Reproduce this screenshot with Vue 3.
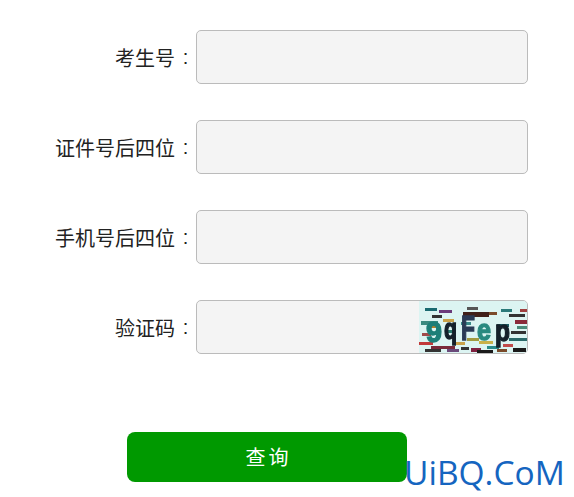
<script setup>
const rows = [
  { label: '考生号' },
  { label: '证件号后四位' },
  { label: '手机号后四位' },
  { label: '验证码', captcha: true }
]
const dashes = [
  [6,7,12,3,'#1a6a70'],[20,9,13,3,'#6a3a7a'],[13,14,10,3,'#333'],[2,20,17,4,'#3a8a80'],[24,18,11,3,'#c9a24a'],
  [48,6,11,3,'#555'],[64,11,14,3,'#7a4a2a'],[44,11,26,5,'#40201a'],[82,8,11,3,'#2a7a7a'],[90,13,16,3,'#333'],
  [96,19,12,4,'#8a2a3a'],[78,23,12,3,'#1a5a60'],[101,8,7,3,'#a04040'],[42,21,10,3,'#3a8a8a'],[12,25,8,2,'#b9802a'],
  [3,32,9,3,'#a04a4a'],[28,29,8,3,'#2a7a70'],[92,30,15,3,'#333'],[98,25,10,3,'#4a8a7a'],[90,37,18,3,'#2a6a6a'],
  [0,41,14,3,'#c03a3a'],[12,45,24,3,'#7a2a3a'],[34,41,12,3,'#c9a24a'],[48,37,12,3,'#a09a40'],[60,40,14,3,'#c9b04a'],
  [6,48,16,3,'#333'],[28,48,12,3,'#6a4a7a'],[52,47,10,4,'#802040'],[68,45,12,3,'#2a8a8a'],[84,43,10,3,'#c04a4a'],
  [58,49,16,3,'#1a1a1a'],[78,48,10,3,'#7a4a2a'],[94,47,13,4,'#1a1a1a'],[42,46,8,3,'#333'],[30,36,7,2,'#d0705a']
]
const letters = [
  { c: '9', x: 7, y: 41, w: 16, cls: 'cap-a' },
  { c: 'q', x: 25, y: 38, w: 13, cls: 'cap-b' },
  { c: 'F', x: 42, y: 39, w: 14, cls: 'cap-c big' },
  { c: 'e', x: 58, y: 39, w: 14, cls: 'cap-d' },
  { c: 'p', x: 76, y: 40, w: 15, cls: 'cap-b' }
]
</script>

<template>
  <main class="page">
    <form class="form" @submit.prevent>
      <div v-for="row in rows" :key="row.label" class="row">
        <label class="label">
          <span>{{ row.label }}</span>
          <span class="colon">:</span>
        </label>
        <div class="field">
          <input class="input" type="text" />
          <svg v-if="row.captcha" class="captcha" viewBox="0 0 108 52" width="108" height="52">
            <rect width="108" height="52" fill="#dcf4f2" />
            <g>
              <rect v-for="(d, i) in dashes" :key="i" :x="d[0]" :y="d[1]" :width="d[2]" :height="d[3]" :fill="d[4]" />
            </g>
            <text
              v-for="l in letters"
              :key="l.c"
              :x="l.x"
              :y="l.y"
              :textLength="l.w"
              lengthAdjust="spacingAndGlyphs"
              class="cap"
              :class="l.cls"
            >{{ l.c }}</text>
          </svg>
        </div>
      </div>
      <div class="actions">
        <button class="submit" type="submit">
          <span>查</span><span>询</span>
        </button>
      </div>
    </form>
    <div class="watermark">UiBQ.CoM</div>
  </main>
</template>

<style>
html, body { background: #fff; }
</style>

<style scoped>
.page {
  position: relative;
  width: 574px;
  height: 497px;
  overflow: hidden;
  background: #fff;
  font-family: "Noto Sans CJK SC", "Liberation Sans", sans-serif;
}
.form {
  display: flex;
  flex-direction: column;
  padding-top: 30px;
}
.row {
  display: flex;
  align-items: center;
  height: 54px;
  margin-bottom: 36px;
}
.label {
  display: flex;
  justify-content: flex-end;
  width: 196px;
  box-sizing: border-box;
  font-size: 20px;
  line-height: 57px;
  color: #222;
  white-space: nowrap;
}
.colon {
  width: 21px;
  text-align: center;
  font-family: "Liberation Sans", sans-serif;
}
.field {
  position: relative;
  width: 332px;
  height: 54px;
}
.input {
  display: block;
  width: 100%;
  height: 100%;
  box-sizing: border-box;
  border: 1px solid #bbb;
  border-radius: 5px;
  background: #f4f4f4;
  padding: 0 8px;
  outline: none;
}
.captcha {
  position: absolute;
  top: 1px;
  right: 1px;
  border-radius: 0 4px 4px 0;
  filter: blur(0.4px);
}
.cap {
  font-family: "Liberation Sans", sans-serif;
  font-weight: 700;
  font-size: 30px;
  stroke-width: 1.4px;
}
.big { font-size: 35px; }
.cap-a { fill: #1d7f78; stroke: #1d7f78; }
.cap-b { fill: #14202a; stroke: #14202a; }
.cap-c { fill: #2a3a55; stroke: #2a3a55; }
.cap-d { fill: #2a8a80; stroke: #2a8a80; }
.actions {
  padding: 42px 0 0 127px;
}
.submit {
  display: flex;
  align-items: center;
  justify-content: center;
  gap: 3px;
  width: 280px;
  height: 50px;
  border: 0;
  border-radius: 8px;
  background: #009900;
  color: #fff;
  font-family: inherit;
  font-size: 20px;
  line-height: 48px;
  padding: 0 0 1px;
}
.watermark {
  position: absolute;
  left: 404px;
  top: 449px;
  font-family: "Open Sans", "Liberation Sans", sans-serif;
  font-size: 33.5px;
  line-height: 46px;
  color: #1565c0;
  white-space: nowrap;
}
</style>
